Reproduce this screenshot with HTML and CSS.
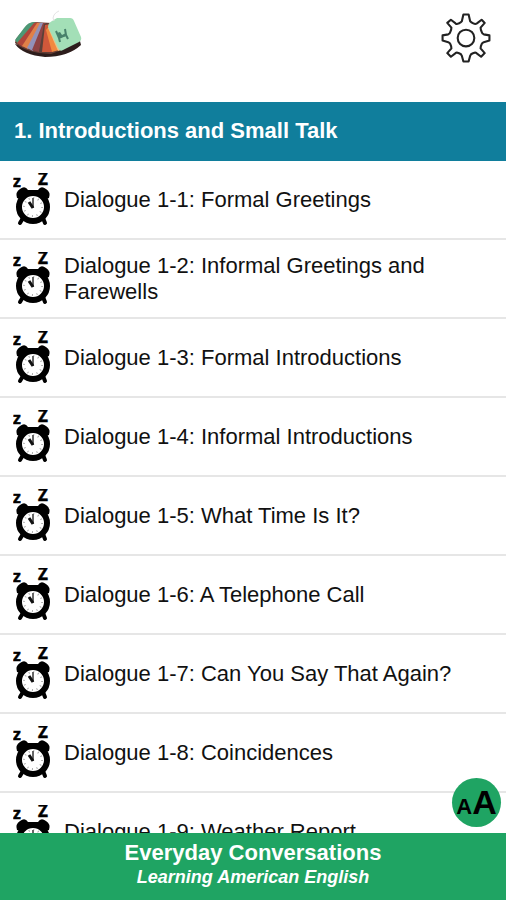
FILE: index.html
```html
<!DOCTYPE html>
<html lang="en">
<head>
    <meta charset="utf-8">
    <title>Everyday Conversations</title>
    <meta name="viewport" content="width=device-width, initial-scale=1">
    <link rel="stylesheet" href="styles.css">
</head>
<body>
    <!-- shared alarm clock icon -->
    <svg class="defs" aria-hidden="true">
        <symbol id="clock" viewBox="0 0 38 54">
            <text class="z small" x="0" y="14">z</text>
            <text class="z big" x="25" y="12">Z</text>
            <path d="M4 25 Q2 19 7 16 Q12 12 15 17 H25 Q28 12 33 16 Q38 19 36 25 L30 27 H10 Z"/>
            <path d="M10 45 L7 50 M30 45 L32 50" stroke="#000" stroke-width="4" stroke-linecap="round"/>
            <circle cx="20" cy="34" r="14" fill="#fff" stroke="#000" stroke-width="6"/>
            <circle cx="20" cy="34" r="9" fill="none" stroke="#aaa" stroke-width="2" stroke-dasharray="1 3.712"/>
            <path d="M20 35 V25" fill="none" stroke="#666" stroke-width="2"/>
            <path d="M20 35 L16 29" fill="none" stroke="#111" stroke-width="3"/>
        </symbol>
    </svg>

    <header class="topbar">
        <svg class="logo" viewBox="0 0 70 48" role="img" aria-label="Flash cards">
            <path d="M1 34 Q9 45 31 47 Q54 47 67 35 L66 31 L30 40 Z" fill="#2d1d1c"/>
            <path d="M1 33 Q1 28 9 21 Q13 13 20 12 L38 13 L48 40 L37 44 Q12 43 1 33Z" fill="#663d35"/>
            <path d="M1 30 L10 18 Q14 12 20 12 L23 13 L4 34 Z" fill="#4d9875"/>
            <path d="M3 33 L20 13 L24 12 L9 37 Z" fill="#b0453a"/>
            <path d="M8 36 L23 13 L27 13 L14 39 Z" fill="#e08048"/>
            <path d="M13 38 L26 13 L30 13 L19 41 Z" fill="#9291b8"/>
            <path d="M18 40 L29 13 L32 13 L25 42 Z" fill="#8e4344"/>
            <path d="M25 42 L30 14 L34 13 L33 43 Z" fill="#5b4038"/>
            <path d="M28 42 L31 15 L37 14 L38 42 Z" fill="#d0583a"/>
            <path d="M32 20 L37 14 L45 40 L38 42 Z" fill="#f28a40"/>
            <path d="M34 18 L38 17 L50 39 L44 41 Z" fill="#efc284"/>
            <path d="M34 17 Q34 13 38 11 L43 8 H56 Q59 8 60 11 L67 27 Q68 30 65 32 L49 40 Q46 42 44 38 Z" fill="#a3dfb7"/>
            <path d="M42 21 L45 28 L52 25 L51 19 M45 28 L46 32 M52 25 L54 29" fill="none" stroke="#48816b" stroke-width="2"/>
            <path d="M43 23 L46 22 L48 25 L52 23 L52 26 L45 28 Z" fill="#48816b"/>
            <path d="M40 11 Q38 8 40 5 Q42 2 45 1" fill="none" stroke="#e4e4e4"/>
        </svg>
        <button class="settings" type="button" aria-label="Settings">
            <svg viewBox="0 0 48 48">
                <path d="M21.5 1.5 H26.5 L28 8 Q29 9 31 10 Q33 11 34.500 10 L39 6.500 L42 9.500 L38 14 Q38 16 39 18 Q39.500 20 41 20.500 L46.500 21.500 V26.500 L41 28 Q39.500 28.500 39 30 Q38 32 38 34 L42 38.500 L38.500 42 L34 38.500 Q33 37.500 31 38.500 Q28.500 39 28 41 L26.500 46.500 H21.500 L20 41 Q19.500 39 17 38.500 Q15 37.500 14 38.500 L9.500 42 L6 38.500 L10 34 Q10 32 9 30 Q8.500 28.500 7 28 L1.500 26.500 V21.500 L7 20.500 Q8.500 20 9 18 Q10 16 10 14 L6 9.500 L9.500 6.500 L14 10 Q15 11 17 10 Q19.500 9 20 8 Z"/>
                <circle cx="24" cy="24" r="8"/>
            </svg>
        </button>
    </header>

    <main class="content">
        <h1 class="chapter">1. Introductions and Small Talk</h1>
        <ul class="dialogues">
            <li><a href="#d1"><svg class="clock"><use href="#clock"/></svg><span>Dialogue 1-1: Formal Greetings</span></a></li>
            <li><a href="#d2"><svg class="clock"><use href="#clock"/></svg><span>Dialogue 1-2: Informal Greetings and Farewells</span></a></li>
            <li><a href="#d3"><svg class="clock"><use href="#clock"/></svg><span>Dialogue 1-3: Formal Introductions</span></a></li>
            <li><a href="#d4"><svg class="clock"><use href="#clock"/></svg><span>Dialogue 1-4: Informal Introductions</span></a></li>
            <li><a href="#d5"><svg class="clock"><use href="#clock"/></svg><span>Dialogue 1-5: What Time Is It?</span></a></li>
            <li><a href="#d6"><svg class="clock"><use href="#clock"/></svg><span>Dialogue 1-6: A Telephone Call</span></a></li>
            <li><a href="#d7"><svg class="clock"><use href="#clock"/></svg><span>Dialogue 1-7: Can You Say That Again?</span></a></li>
            <li><a href="#d8"><svg class="clock"><use href="#clock"/></svg><span>Dialogue 1-8: Coincidences</span></a></li>
            <li><a href="#d9"><svg class="clock"><use href="#clock"/></svg><span>Dialogue 1-9: Weather Report</span></a></li>
        </ul>
    </main>

    <footer class="footer">
        <button class="textsize" type="button" aria-label="Text size"><span class="a1">A</span><span class="a2">A</span></button>
        <div class="title">Everyday Conversations</div>
        <div class="subtitle">Learning American English</div>
    </footer>
</body>
</html>
```
FILE: styles.css
```css
* {
    box-sizing: border-box;
}
body {
    margin: 0;
    height: 100vh;
    display: flex;
    flex-direction: column;
    background: #fff;
    color: #111;
    font-family: "Liberation Sans", Arial, sans-serif;
}
.defs {
    position: absolute;
    width: 0;
    height: 0;
}

/* top bar */
.topbar {
    display: flex;
    justify-content: space-between;
    align-items: flex-start;
    padding: 10px 15px 39px 14px;
    flex: none;
}
.logo {
    width: 70px;
    height: 48px;
}
.settings {
    margin: 3px 0 0;
    padding: 0;
    border: 0;
    background: none;
}
.settings svg {
    display: block;
    width: 50px;
    height: 50px;
    fill: none;
    stroke: #222;
    stroke-width: 2;
    stroke-linejoin: round;
}

/* dialogue list */
.content {
    flex: 1;
    min-height: 0;
    overflow: hidden;
}
.chapter {
    margin: 0;
    padding: 16px 14px 17px;
    background: #107e9c;
    color: #fff;
    font-size: 22px;
    line-height: 26px;
}
.dialogues {
    margin: 0;
    padding: 0;
    list-style: none;
}
.dialogues a {
    display: flex;
    align-items: center;
    gap: 13px;
    height: 79px;
    padding: 0 40px 0 13px;
    border-bottom: 2px solid #e6e6e6;
    color: #111;
    font-size: 22px;
    line-height: 26px;
    text-decoration: none;
}
.clock {
    flex: none;
    width: 38px;
    height: 54px;
}
.z {
    font-family: "Open Sans", sans-serif;
    font-weight: bold;
    stroke: #000;
    stroke-width: 0.5;
}
.small {
    font-size: 16px;
}
.big {
    font-size: 17px;
}

/* footer */
.footer {
    position: relative;
    flex: none;
    padding: 7px 0 12px;
    background: #1fa463;
    color: #fff;
    text-align: center;
    font-weight: bold;
}
.title {
    font-size: 22px;
    line-height: 26px;
}
.subtitle {
    font-size: 18px;
    line-height: 22px;
    font-style: italic;
}
.textsize {
    position: absolute;
    right: 5px;
    bottom: 73px;
    display: flex;
    justify-content: center;
    align-items: baseline;
    width: 49px;
    height: 49px;
    padding: 7px 0 0;
    border: 0;
    border-radius: 50%;
    background: #1fa463;
    color: #000;
    font-family: "Liberation Sans", Arial, sans-serif;
    font-weight: bold;
}
.a1 {
    font-size: 22px;
}
.a2 {
    font-size: 34px;
    line-height: 34px;
}
```
